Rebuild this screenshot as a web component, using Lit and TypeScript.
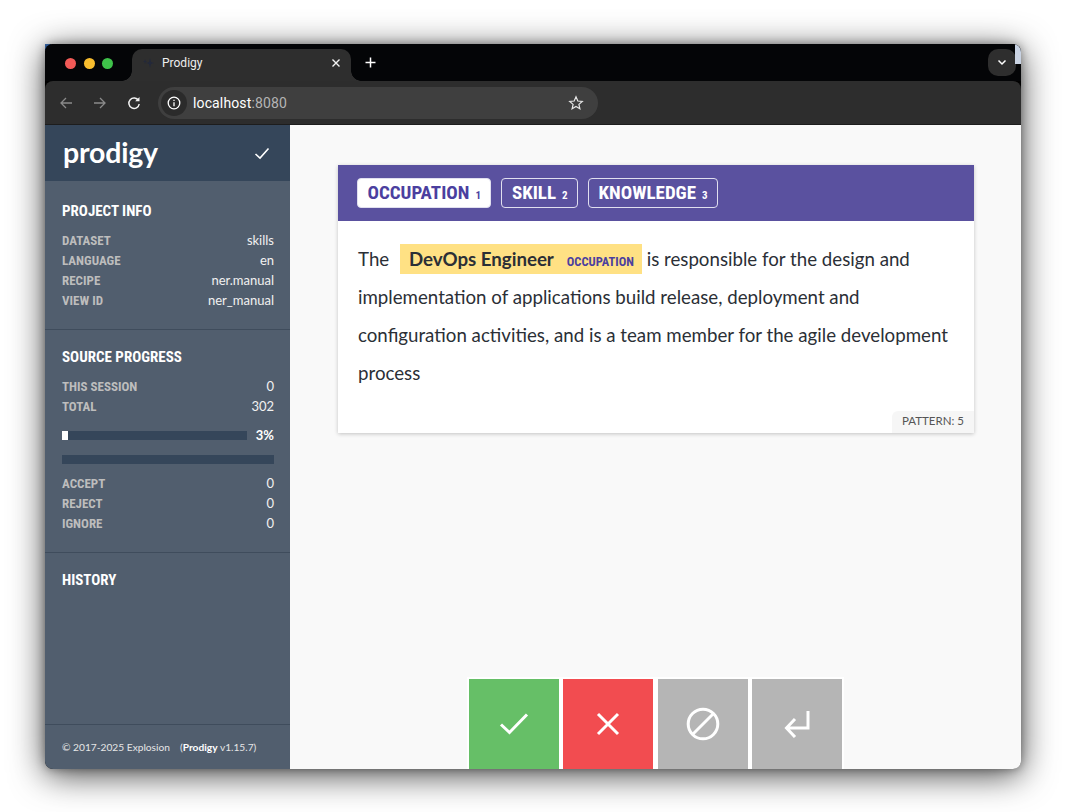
import { LitElement, html, css } from "lit";
import { customElement } from "lit/decorators.js";

const cond = css`"Roboto Condensed", "Liberation Sans Narrow", "DejaVu Sans Condensed", Roboto, sans-serif`;

@customElement("app-root")
export class AppRoot extends LitElement {
  static styles = css`
    :host { display: block; width: 1065px; height: 812px; overflow: hidden; background: #fff; font-family: Lato, sans-serif; }
    .page { position: relative; padding: 44px 44px 43px 45px; height: 812px; box-sizing: border-box; }
    .corner { position: absolute; left: 45px; top: 44px; width: 6px; height: 6px; background: #3f74bd; }
    .win { position: relative; height: 725px; display: flex; flex-direction: column; border-radius: 8px; overflow: hidden; background: #000; }
    .shadow { position: relative; border-radius: 8px; box-shadow: 0 6px 34px rgba(0,0,0,.72), 0 0 10px rgba(0,0,0,.35); }
    .tabs { height: 37px; flex: none; display: flex; background: #040507; position: relative; }
    .lights { width: 87px; display: flex; gap: 7.5px; padding: 14px 0 0 20px; box-sizing: border-box; flex: none; }
    .lights i { width: 11px; height: 11px; border-radius: 50%; }
    .tab { position: relative; margin-top: 5px; width: 219px; height: 32px; background: #2e2e2e; border-radius: 10px 10px 0 0; display: flex; align-items: center; padding: 0 10px 4px 10px; box-sizing: border-box; color: #eee; font: 400 12px Roboto, sans-serif; }
    .tab::before, .tab::after { content: ""; position: absolute; bottom: 0; width: 10px; height: 10px; }
    .tab::before { left: -10px; background: radial-gradient(circle at 0 0, transparent 9.5px, #2e2e2e 10px); }
    .tab::after { right: -10px; background: radial-gradient(circle at 100% 0, transparent 9.5px, #2e2e2e 10px); }
    .tab span { margin-left: 8px; flex: 1; }
    .plus { margin: 13px 0 0 14px; }
    .chev { position: absolute; right: 5px; top: 5px; width: 28px; height: 27px; background: #2e2e2e; border-radius: 10px; display: flex; align-items: center; justify-content: center; }
    .chip { position: absolute; right: 0; top: 0; width: 6px; height: 20px; background: #c9d3e3; }
    .bar { height: 44px; flex: none; position: relative; background: #2d2d2d; border-radius: 8px 8px 0 0; display: flex; align-items: center; padding-left: 13px; border-bottom: 1px solid #1d1d1d; box-sizing: border-box; }
    .nav { display: flex; gap: 18px; align-items: center; }
    .omni { margin-left: 16px; width: 440px; height: 32px; background: #3f3f3f; border-radius: 16px; display: flex; align-items: center; padding: 0 14px 0 3px; box-sizing: border-box; font: 400 14px Roboto, sans-serif; color: #fff; letter-spacing: .13px; }
    .info { width: 26px; height: 26px; border-radius: 50%; background: #2b2b2b; display: flex; align-items: center; justify-content: center; margin-right: 6px; }
    .omni b { font-weight: 400; flex: 1; }
    .omni em { font-style: normal; color: #b5b5b5; }
    .app { flex: 1; min-height: 0; display: flex; }
    .side { width: 245px; flex: none; background: #515e6e; color: #fff; display: flex; flex-direction: column; }
    .logo { height: 56px; flex: none; background: #35465a; display: flex; align-items: center; justify-content: space-between; padding: 0 20px 0 18px; box-sizing: border-box; font: 700 28.5px Lato, sans-serif; letter-spacing: -.2px; }
    .logo span { margin-top: -3px; }
    .sec { padding: 17px 16px 18px 17px; border-bottom: 1px solid #3f4c5c; }
    .sec.first { padding-top: 20px; }
    .sec.grow { flex: 1; padding-top: 17px; border-bottom: 1px solid #3f4c5c; }
    h2 { margin: 0 0 10px; font: 700 15px/20px ${cond}; color: #fff; }
    .row { display: flex; justify-content: space-between; height: 20px; font: 400 13px/19px Lato, sans-serif; color: #f1f1f1; }
    .row label { font: 700 13px/20px ${cond}; color: #bdbdbd; }
    .prog { display: flex; align-items: center; height: 9px; margin-top: 14px; }
    .track { flex: 1; height: 9px; background: #35465a; display: block; }
    .track i { display: block; width: 6px; height: 9px; background: #fff; }
    .pct { width: 27px; text-align: right; font: 700 13px/9px Lato, sans-serif; }
    .track.full { margin: 15px 0 10px; flex: none; }
    .foot { height: 44px; flex: none; padding: 0 17px; display: flex; align-items: center; font: 400 10.2px Lato, sans-serif; color: #e6e6e6; white-space: pre; }
    .foot span { margin-left: 10px; }
    .foot b { color: #fff; }
    .main { flex: 1; min-width: 0; background: #f9f9f9; display: flex; flex-direction: column; align-items: center; }
    .card { margin-top: 40px; margin-left: 1px; width: 636px; height: 268px; flex: none; background: #fff; box-shadow: 0 1px 4px rgba(0,0,0,.22); display: flex; flex-direction: column; position: relative; }
    .head { height: 56px; flex: none; background: #5a519f; display: flex; align-items: center; gap: 10px; padding: 0 19px; box-sizing: border-box; }
    .lab { height: 30px; box-sizing: border-box; border: 1px solid #e0dfef; border-radius: 4px; color: #fff; font: 700 19px/28px ${cond}; padding: 0 9.5px; display: flex; align-items: baseline; }
    .lab.on { background: #fff; color: #4b3f9f; }
    .lab sup { font: 700 11px/1 ${cond}; margin-left: 6px; }
    .text { padding: 19px 20px 0; font: 400 18.7px/38px Lato, sans-serif; color: #2b2f36; }
    .ent { background: #ffe184; display: inline-block; line-height: 30px; height: 30px; padding: 0 8px 0 9px; margin: 0 0 0 6px; font-weight: 700; letter-spacing: -.02px; }
    .ent small { font: 700 12.5px/1 ${cond}; color: #4b3f9f; margin-left: 13px; letter-spacing: 0; }
    .pat { position: absolute; right: 0; bottom: 0; height: 22px; padding: 0 10px 0 10px; background: #f6f6f6; border-radius: 6px 0 0 0; font: 400 11.5px/20px Lato, sans-serif; color: #555; }
    .btns { margin-top: auto; display: flex; gap: 4.33px; padding: 2px 2px 0; background: #fff; }
    .btn { width: 90px; height: 90px; display: flex; align-items: center; justify-content: center; }
  `;

  render() {
    return html`
      <div class="page"><div class="corner"></div><div class="shadow"><div class="win">
        <div class="tabs">
          <div class="lights"><i style="background:#f25a57"></i><i style="background:#f9bd2e"></i><i style="background:#3fc24a"></i></div>
          <div class="tab">
            <svg width="12" height="12" viewBox="0 0 12 12"><path d="M8 1 9 5 12 6 9 7 8 11 7 7 4 6 7 5z M3 2 3.600 4 5 4.500 3.600 5 3 7 2.400 5 1 4.500 2.400 4z" fill="#23283a"/></svg>
            <span>Prodigy</span>
            <svg width="10" height="10" viewBox="0 0 10 10"><path d="M1.500 1.500 8.500 8.500M8.500 1.500 1.500 8.500" stroke="#f2f2f2" stroke-width="1.400"/></svg>
          </div>
          <svg class="plus" width="11" height="11" viewBox="0 0 11 11"><path d="M5.500 .5v10M.5 5.500h10" stroke="#fff" stroke-width="1.500"/></svg>
          <div class="chev"><svg width="10" height="7" viewBox="0 0 10 7"><path d="M1.500 1.500 5 5 8.500 1.500" stroke="#fff" stroke-width="1.500" fill="none"/></svg></div>
          <div class="chip"></div>
        </div>
        <div class="bar">
          <div class="nav">
            <svg width="16" height="16" viewBox="0 0 16 16" fill="none"><path d="M14 8H3M8 3 3 8l5 5" stroke="#8a8a8a" stroke-width="1.300"/></svg>
            <svg width="16" height="16" viewBox="0 0 16 16" fill="none"><path d="M2 8h11M8 3l5 5-5 5" stroke="#8a8a8a" stroke-width="1.300"/></svg>
            <svg width="16" height="16" viewBox="0 0 16 16" fill="none"><path d="M12.500 5.500A5.200 5.200 0 1 0 13.200 9" stroke="#f2f2f2" stroke-width="1.500"/><path d="M13.500 2v4.300H9.200z" fill="#f2f2f2"/></svg>
          </div>
          <div class="omni">
            <div class="info"><svg width="14" height="14" viewBox="0 0 14 14" fill="none"><circle cx="7" cy="7" r="5.800" stroke="#fff" stroke-width="1.300"/><path d="M7 6.200v4M7 3.800v1.300" stroke="#fff" stroke-width="1.300"/></svg></div>
            <b>localhost<em>:8080</em></b>
            <svg width="16" height="16" viewBox="0 0 16 16" fill="none"><path d="M8 1.800 9.800 6l4.500.4-3.400 3 1 4.400L8 11.500l-3.900 2.300 1-4.400-3.400-3L6.200 6z" stroke="#e6e6e6" stroke-width="1.200"/></svg>
          </div>
        </div>
        <div class="app">
          <aside class="side">
            <div class="logo"><span>prodigy</span>
              <svg width="16" height="13" viewBox="0 0 16 13" fill="none"><path d="M1.500 7 6 11 14.500 1.500" stroke="#fff" stroke-width="1.600"/></svg>
            </div>
            <section class="sec first">
              <h2>PROJECT INFO</h2>
              <div class="row"><label>DATASET</label><span>skills</span></div>
              <div class="row"><label>LANGUAGE</label><span>en</span></div>
              <div class="row"><label>RECIPE</label><span>ner.manual</span></div>
              <div class="row"><label>VIEW ID</label><span>ner_manual</span></div>
            </section>
            <section class="sec">
              <h2>SOURCE PROGRESS</h2>
              <div class="row"><label>THIS SESSION</label><span>0</span></div>
              <div class="row"><label>TOTAL</label><span>302</span></div>
              <div class="prog"><span class="track"><i></i></span><span class="pct">3%</span></div>
              <div class="track full"></div>
              <div class="row"><label>ACCEPT</label><span>0</span></div>
              <div class="row"><label>REJECT</label><span>0</span></div>
              <div class="row"><label>IGNORE</label><span>0</span></div>
            </section>
            <section class="sec grow"><h2>HISTORY</h2></section>
            <div class="foot">© 2017-2025 Explosion<span>(<b>Prodigy</b> v1.15.7)</span></div>
          </aside>
          <main class="main">
            <div class="card">
              <div class="head">
                <div class="lab on">OCCUPATION<sup>1</sup></div>
                <div class="lab">SKILL<sup>2</sup></div>
                <div class="lab">KNOWLEDGE<sup>3</sup></div>
              </div>
              <div class="text">The <span class="ent">DevOps Engineer<small>OCCUPATION</small></span> is responsible for the design and implementation of applications build release, deployment and configuration activities, and is a team member for the agile development process</div>
              <div class="pat">PATTERN: 5</div>
            </div>
            <div class="btns">
              <div class="btn" style="background:#66bf67"><svg width="30" height="24" viewBox="0 0 30 24" fill="none"><path d="M2 12.500 10.500 20.500 28 2.500" stroke="#fff" stroke-width="3"/></svg></div>
              <div class="btn" style="background:#f24c50"><svg width="24" height="24" viewBox="0 0 24 24" fill="none"><path d="M2 2 22 22M22 2 2 22" stroke="#fff" stroke-width="3"/></svg></div>
              <div class="btn" style="background:#b5b5b5"><svg width="34" height="34" viewBox="0 0 34 34" fill="none"><circle cx="17" cy="17" r="14.800" stroke="#fff" stroke-width="3"/><path d="M7 27 27 7" stroke="#fff" stroke-width="3"/></svg></div>
              <div class="btn" style="background:#b5b5b5"><svg width="26" height="28" viewBox="0 0 26 28" fill="none"><path d="M24 1v17H3M11 9 2.500 18 11 27" stroke="#fff" stroke-width="3"/></svg></div>
            </div>
          </main>
        </div>
      </div></div></div>
    `;
  }
}
